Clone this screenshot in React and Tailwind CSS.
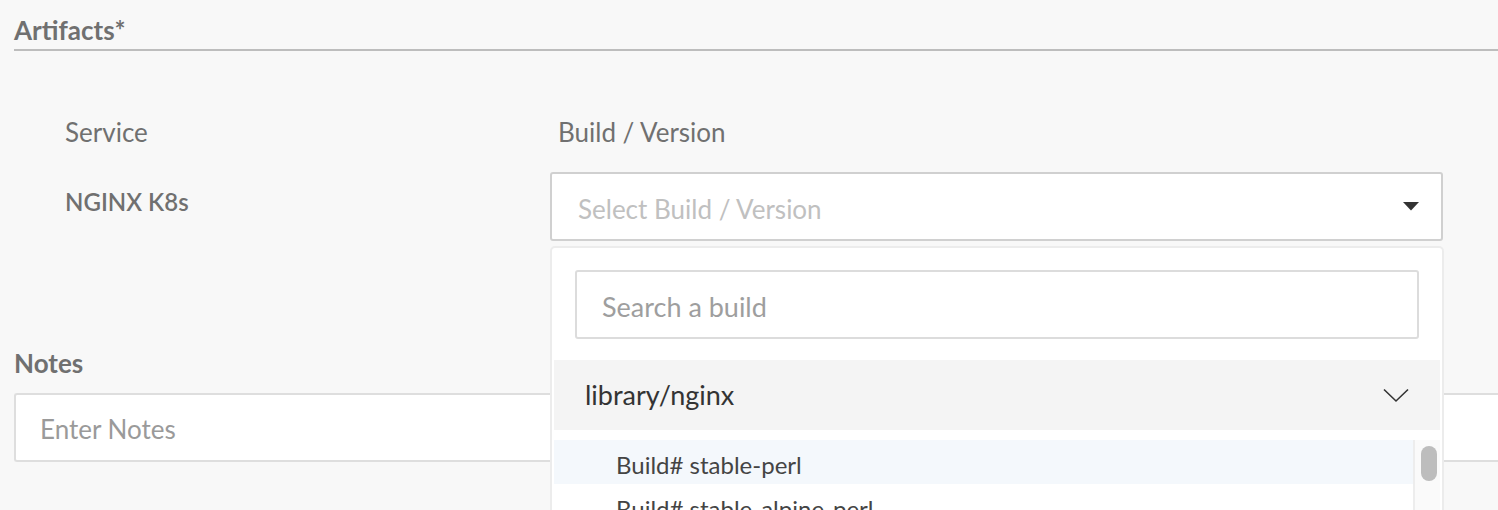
import React, { useState } from 'react';

const font = { fontFamily: 'Lato, "Open Sans", sans-serif' };

const builds = ['stable-perl', 'stable-alpine-perl', 'stable-alpine', 'stable'];

const App = () => {
  const [notes, setNotes] = useState('');
  const [search, setSearch] = useState('');

  return (
    <div className="relative min-h-[510px] overflow-hidden bg-[#f8f8f8] font-['Lato',sans-serif]">
      {/* Artifacts header */}
      <div className="pl-[14px] pt-[16px]">
        <div className="border-b-2 border-[#bdbdbd] pb-[4px] text-[26px] font-bold leading-[29px] text-[#707070]">
          Artifacts*
        </div>
      </div>

      {/* Service / Build table */}
      <div className="grid grid-cols-[550px_893px] pt-[66px]">
        <div className="pl-[65px] text-[26px] leading-[30px] text-[#707070]">Service</div>
        <div className="pl-[8px] text-[26px] leading-[30px] text-[#707070]">Build / Version</div>

        <div className="pl-[65px] pt-[40px] text-[24px] font-semibold leading-[30px] text-[#707070]">NGINX K8s</div>
        <div className="pt-[25px]">
          <div className="flex h-[69px] items-center justify-between rounded-[3px] border-2 border-[#d0d0d0] bg-white pl-[26px] pr-[22px]">
            <span className="pt-[5px] text-[26px] text-[#c0c0c0]">Select Build / Version</span>
            <svg width="16" height="9" viewBox="0 0 16 9">
              <path d="M0 0 H16 L8 8.5 Z" fill="#333" />
            </svg>
          </div>
          <div className="mt-[23px] h-[18px] w-[18px] rounded-[2px] border-2 border-[#bbb] bg-white" />
        </div>
      </div>

      {/* Notes */}
      <div className="pl-[14px] pt-[66px]">
        <div className="text-[26px] font-bold leading-[30px] text-[#707070]">Notes</div>
        <input
          className="mt-[15px] h-[69px] w-full rounded-l-[3px] border-2 border-r-0 border-[#dedede] bg-white pl-[24px] pt-[2px] text-[26px] text-[#555] outline-none placeholder:text-[#9a9a9a]"
          style={font}
          placeholder="Enter Notes"
          value={notes}
          onChange={(e) => setNotes(e.target.value)}
        />
      </div>

      {/* Dropdown menu */}
      <div className="absolute left-[550px] top-[246px] h-[300px] w-[894px] rounded-t-[5px] border-2 border-[#ececec] bg-white">
        <div className="px-[23px] pt-[22px]">
          <input
            className="h-[69px] w-full rounded-[3px] border-2 border-[#dcdcdc] bg-white pl-[25px] pt-[3px] text-[27px] text-[#555] outline-none placeholder:text-[#9e9e9e]"
            style={font}
            placeholder="Search a build"
            value={search}
            onChange={(e) => setSearch(e.target.value)}
          />
        </div>
        <div className="mx-[2px] mt-[21px] flex h-[70px] items-center justify-between bg-[#f4f4f4] pl-[31px] pr-[31px]">
          <span className="text-[27px] text-[#333]">library/nginx</span>
          <svg width="26" height="15" viewBox="0 0 26 15">
            <path d="M1 1.5 L13 13 L25 1.5" fill="none" stroke="#333" strokeWidth="1.6" />
          </svg>
        </div>
        <div className="mx-[2px] mt-[10px] flex">
          <div className="flex-1">
            {builds.map((b, i) => (
              <div
                key={b}
                className={`flex h-[44px] items-center pl-[62px] pt-[6px] text-[24px] text-[#444] ${i === 0 ? 'bg-[#f4f8fc]' : ''}`}
              >
                Build# {b}
              </div>
            ))}
          </div>
          <div className="w-[27px] border-l-2 border-[#ededed] bg-[#fafafa] pl-[6px] pt-[6px]">
            <div className="h-[35px] w-[16px] rounded-full bg-[#bdbdbd]" />
          </div>
        </div>
      </div>
    </div>
  );
};

export default App;
